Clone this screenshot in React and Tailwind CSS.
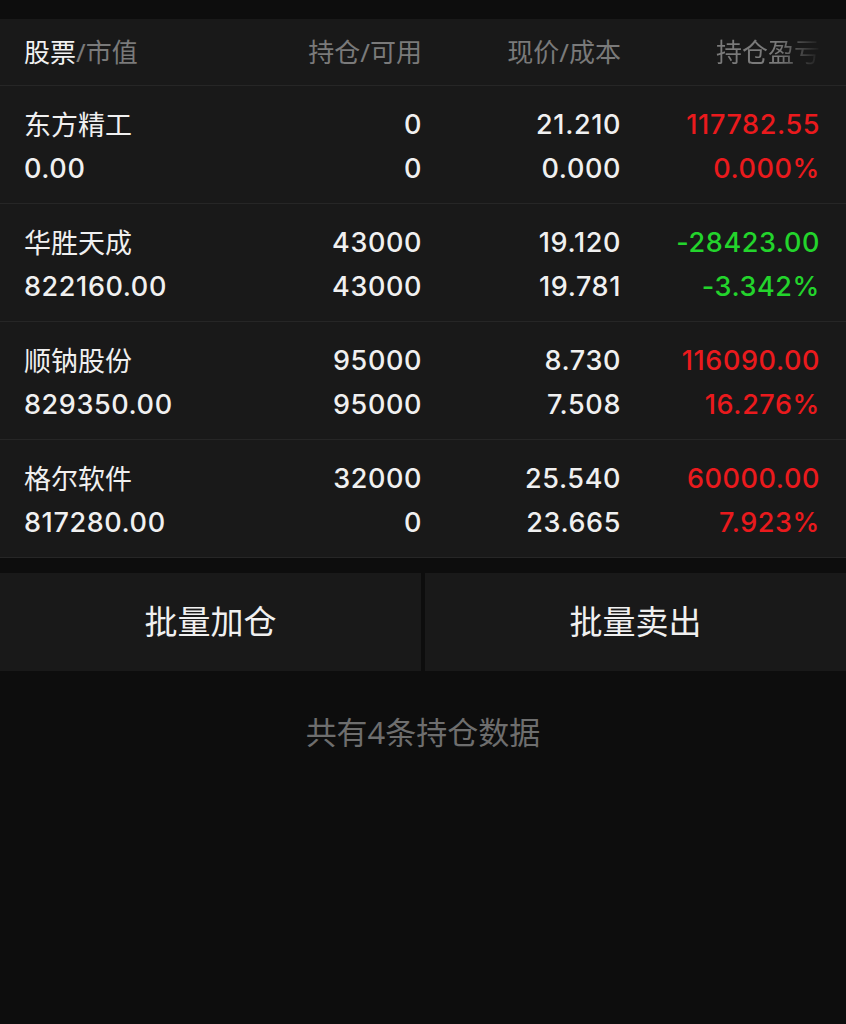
import React from "react";

const rows = [
  { name: "东方精工", value: "0.00", hold: "0", avail: "0", price: "21.210", cost: "0.000", pl: "117782.55", pct: "0.000%", up: true },
  { name: "华胜天成", value: "822160.00", hold: "43000", avail: "43000", price: "19.120", cost: "19.781", pl: "-28423.00", pct: "-3.342%", up: false },
  { name: "顺钠股份", value: "829350.00", hold: "95000", avail: "95000", price: "8.730", cost: "7.508", pl: "116090.00", pct: "16.276%", up: true },
  { name: "格尔软件", value: "817280.00", hold: "32000", avail: "0", price: "25.540", cost: "23.665", pl: "60000.00", pct: "7.923%", up: true },
];

const font = { fontFamily: '"Noto Sans", "Noto Sans CJK SC", sans-serif' };
const num = "font-['Inter','Noto_Sans_CJK_SC',sans-serif] font-medium text-[27px] tracking-[0.6px]";

export default function App() {
  return (
    <div className="min-h-[1024px] w-[846px] bg-[#0d0d0d] pt-[19px]" style={font}>
      {/* Header */}
      <div className="grid h-[67px] grid-cols-4 items-center border-b border-[#262626] bg-[#191919] pl-6 pr-[26px] text-[26px] text-[#7a7a7a]">
        <div>
          <span className="text-[#f2f2f2]">股票</span>/市值
        </div>
        <div className="text-right">持仓/可用</div>
        <div className="text-right">现价/成本</div>
        <div className="text-right">
          <span className="bg-[linear-gradient(to_right,#7a7a7a_60%,#1c1c1c_100%)] bg-clip-text text-transparent">
            持仓盈亏
          </span>
        </div>
      </div>

      {/* Rows */}
      {rows.map((r) => {
        const color = r.up ? "text-[#ea1a1d]" : "text-[#23d42c]";
        return (
          <div
            key={r.name}
            className="grid h-[118px] grid-cols-4 content-center gap-y-[9px] border-b border-[#262626] bg-[#191919] pt-[3px] pl-6 pr-[26px] leading-[35px] text-[#f0f0f0]"
          >
            <div className="text-[27px]">{r.name}</div>
            <div className={`text-right ${num}`}>{r.hold}</div>
            <div className={`text-right ${num}`}>{r.price}</div>
            <div className={`text-right ${num} ${color}`}>{r.pl}</div>
            <div className={num}>{r.value}</div>
            <div className={`text-right ${num}`}>{r.avail}</div>
            <div className={`text-right ${num}`}>{r.cost}</div>
            <div className={`text-right ${num} ${color}`}>{r.pct}</div>
          </div>
        );
      })}

      {/* Buttons */}
      <div className="mt-[15px] flex gap-1">
        <button className="h-[98px] flex-1 bg-[#191919] text-[33px] text-[#f0f0f0]">批量加仓</button>
        <button className="h-[98px] flex-1 bg-[#191919] text-[33px] text-[#f0f0f0]">批量卖出</button>
      </div>

      <div className="pt-[38px] text-center text-[31px] text-[#6e6e6e]">共有4条持仓数据</div>
    </div>
  );
}
